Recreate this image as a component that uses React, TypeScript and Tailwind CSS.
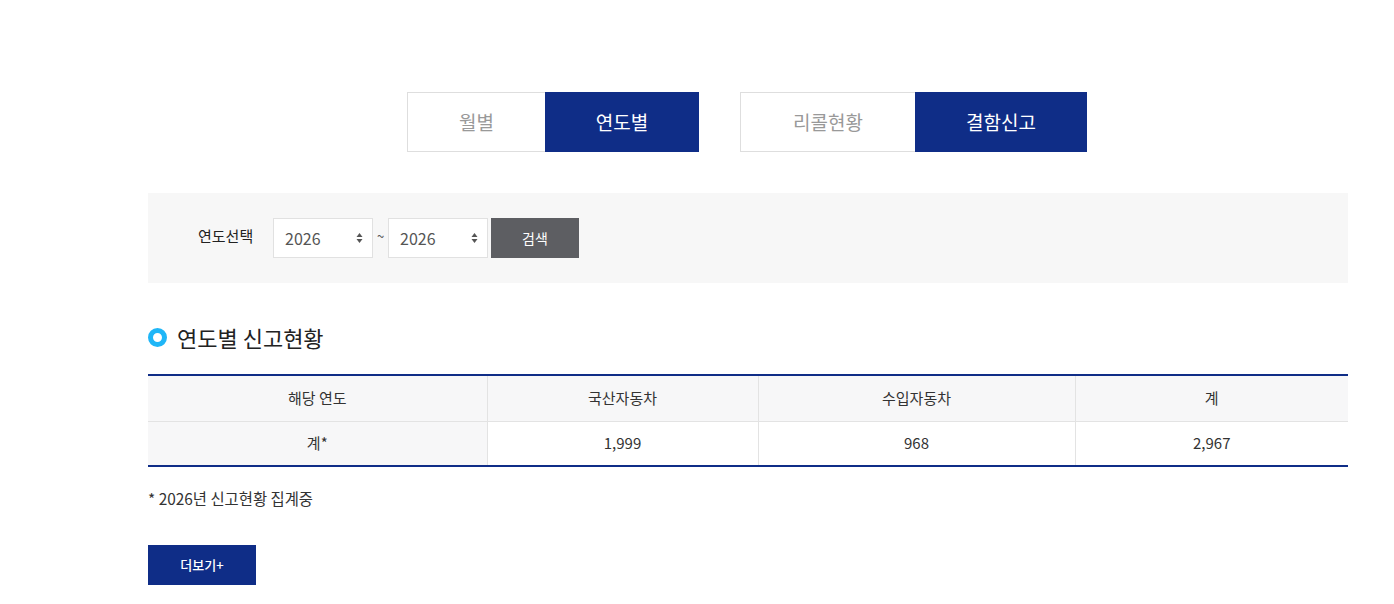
import React from "react";

const font = { fontFamily: '"Noto Sans CJK KR", "Noto Sans", sans-serif' };

function Arrows() {
  return (
    <svg width="7" height="12" viewBox="0 0 7 12" className="shrink-0">
      <path d="M3.5 1 L6.5 5 L0.5 5 Z" fill="#555" />
      <path d="M3.5 11 L6.5 7 L0.5 7 Z" fill="#555" />
    </svg>
  );
}

function YearSelect() {
  return (
    <div className="w-[100px] h-[40px] bg-white border border-[#e1e1e1] flex items-center justify-between pl-[11px] pr-[9px]">
      <span className="text-[16px] text-[#555]">2026</span>
      <Arrows />
    </div>
  );
}

export default function App() {
  return (
    <div className="w-[1394px] h-[604px] bg-white overflow-hidden" style={font}>
      <div className="w-[1200px] ml-[148px] pt-[92px]">
        {/* Tabs */}
        <div className="flex pl-[259px] gap-[41px]">
          <div className="flex h-[60px]">
            <div className="w-[138px] border border-[#dedede] border-r-0 flex items-center justify-center text-[19px] text-[#999]">월별</div>
            <div className="w-[154px] bg-[#0f2d87] flex items-center justify-center text-[19px] text-white">연도별</div>
          </div>
          <div className="flex h-[60px]">
            <div className="w-[175px] border border-[#dedede] border-r-0 flex items-center justify-center text-[19px] text-[#999]">리콜현황</div>
            <div className="w-[172px] bg-[#0f2d87] flex items-center justify-center text-[19px] text-white">결함신고</div>
          </div>
        </div>

        {/* Search */}
        <div className="mt-[41px] h-[90px] bg-[#f7f7f7] flex items-center pl-[50px]">
          <span className="text-[15px] text-[#222] w-[75px] -mt-[4px]">연도선택</span>
          <YearSelect />
          <span className="w-[15px] text-center text-[13px] text-[#555] -mt-[4px]">~</span>
          <YearSelect />
          <div className="ml-[3px] w-[88px] h-[40px] bg-[#5d5e62] text-white text-[14px] flex items-center justify-center">검색</div>
        </div>

        {/* Heading */}
        <div className="mt-[40px] flex items-center h-[28px]">
          <div className="w-[19px] h-[19px] rounded-full border-[5px] border-[#1fb6f7] box-border" />
          <span className="ml-[10px] text-[22px] text-[#222]">연도별 신고현황</span>
        </div>

        {/* Table */}
        <table className="mt-[23px] w-[1200px] border-collapse border-t-2 border-b-2 border-t-[#0f2d87] border-b-[#0f2d87] text-[15px] text-[#333]">
          <colgroup>
            <col className="w-[339px]" />
            <col className="w-[271px]" />
            <col className="w-[317px]" />
            <col className="w-[273px]" />
          </colgroup>
          <thead>
            <tr className="h-[46px] bg-[#f7f7f8]">
              <th className="font-normal border-b border-[#e3e3e3]">해당 연도</th>
              <th className="font-normal border-b border-l border-[#e3e3e3]">국산자동차</th>
              <th className="font-normal border-b border-l border-[#e3e3e3]">수입자동차</th>
              <th className="font-normal border-b border-l border-[#e3e3e3]">계</th>
            </tr>
          </thead>
          <tbody>
            <tr className="h-[45px]">
              <td className="text-center bg-[#f7f7f8]">계*</td>
              <td className="text-center border-l border-[#e3e3e3]">1,999</td>
              <td className="text-center border-l border-[#e3e3e3]">968</td>
              <td className="text-center border-l border-[#e3e3e3]">2,967</td>
            </tr>
          </tbody>
        </table>

        <p className="mt-[20px] text-[15.4px] text-[#333]">* 2026년 신고현황 집계중</p>

        <div className="mt-[35px] w-[108px] h-[40px] bg-[#0f2d87] text-white text-[13px] font-medium flex items-center justify-center">더보기+</div>
      </div>
    </div>
  );
}
